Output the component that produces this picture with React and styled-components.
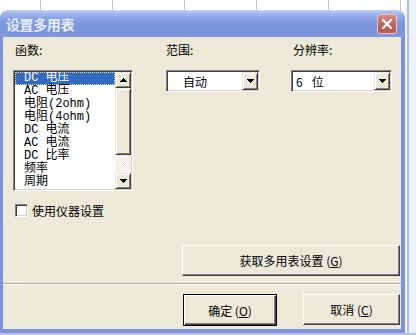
import styled, { createGlobalStyle, css } from "styled-components";

const GlobalStyle = createGlobalStyle`
	html, body {
		margin: 0;
		padding: 0;
		background: #fff;
	}
	body {
		font-family: "Noto Sans CJK SC", "Liberation Sans", sans-serif;
		font-size: 12px;
	}
`;

const Desktop = styled.div`
	width: 416px;
	height: 335px;
	overflow: hidden;
	box-sizing: border-box;
	padding-top: 10px;
	background-color: #fff;
	background-image: linear-gradient(
			180deg,
			transparent 333px,
			#b9c3e3 333px
		),
		linear-gradient(
			90deg,
			transparent 405px,
			#f4f6fb 405px,
			#f4f6fb 407px,
			#aebde9 407px,
			#aebde9 409px,
			#edf1fa 409px
		),
		linear-gradient(90deg, #c6c6c6 1px, transparent 1px);
	background-size: 100% 100%, 100% 100%, 72px 100%;
	background-position: 0 0, 0 0, 40px 0;
	background-repeat: no-repeat, no-repeat, repeat-x;
`;

const Window = styled.div`
	width: 405px;
	border-radius: 8px 8px 0 0;
	overflow: hidden;
	display: flex;
	flex-direction: column;
`;

const TitleBar = styled.div`
	height: 27px;
	display: flex;
	align-items: center;
	justify-content: space-between;
	padding: 0 8px 0 6px;
	background: linear-gradient(
		180deg,
		#c6d3f6 0px,
		#a5b8ed 3px,
		#8ba3e5 8px,
		#7d97df 14px,
		#7b94de 22px,
		#8399e0 27px
	);
`;

const Title = styled.span`
	color: #e6edfb;
	font-weight: 700;
	font-size: 14px;
	letter-spacing: -0.4px;
`;

const CloseButton = styled.div`
	width: 20px;
	height: 20px;
	box-sizing: border-box;
	border: 1px solid #e9c9c6;
	border-radius: 3px;
	background: linear-gradient(180deg, #d48c84, #bd6158 60%, #b65a52);
	display: flex;
	align-items: center;
	justify-content: center;
`;

const Frame = styled.div`
	height: 292px;
	background: #ece9d8;
	border: solid #7d93df;
	border-width: 0 4px 4px 3px;
	display: flex;
	flex-direction: column;
`;

const TopArea = styled.div`
	display: flex;
	padding: 7px 0 0 10px;
`;

const Column = styled.div`
	width: ${(p) => p.$w}px;
	margin-left: ${(p) => p.$gap || 0}px;
	display: flex;
	flex-direction: column;
`;

const Label = styled.div`
	height: 12px;
	line-height: 12px;
	margin: 0 0 14px ${(p) => p.$indent || 0}px;
	color: #000;
`;

const Sunken = css`
	box-sizing: border-box;
	border: 1px solid;
	border-color: #808080 #fff #fff #808080;
	box-shadow: inset 1px 1px #404040, inset -1px -1px #d4d0c8;
	background: #fff;
	padding: 1px;
`;

const Raised = css`
	box-sizing: border-box;
	background: #ece9d8;
	border: 1px solid;
	border-color: #ece9d8 #404040 #404040 #ece9d8;
	box-shadow: inset 1px 1px #fff, inset -1px -1px #808080;
`;

const ListBox = styled.div`
	${Sunken}
	width: 120px;
	height: 121px;
	display: flex;
`;

const Items = styled.div`
	flex: 1;
	display: flex;
	flex-direction: column;
	font-family: "Liberation Mono", "Noto Sans CJK SC", monospace;
	font-size: 12px;
	overflow: hidden;
`;

const Item = styled.div`
	height: 13px;
	line-height: 13px;
	padding-left: 9px;
	white-space: pre;
	color: #000;
	${(p) =>
		p.$selected &&
		css`
			background: #316ac5;
			color: #fff;
			outline: 1px dotted #e8d890;
			outline-offset: -1px;
		`}
`;

const ScrollBar = styled.div`
	width: 16px;
	display: flex;
	flex-direction: column;
`;

const ScrollButton = styled.div`
	${Raised}
	height: ${(p) => p.$h}px;
	display: flex;
	align-items: center;
	justify-content: center;
`;

const Track = styled.div`
	flex: 1;
	background: repeating-conic-gradient(#fff 0 25%, #ece9d8 0 50%) 0 0 / 2px
		2px;
`;

const Combo = styled.div`
	${Sunken}
	height: 22px;
	display: flex;
`;

const ComboText = styled.div`
	flex: 1;
	display: flex;
	align-items: center;
	gap: 9px;
	padding-left: ${(p) => p.$indent}px;
	white-space: pre;
	color: #000;
`;

const DropButton = styled.div`
	${Raised}
	width: 16px;
	display: flex;
	align-items: center;
	justify-content: center;
`;

const CheckRow = styled.label`
	display: flex;
	align-items: center;
	gap: 4px;
	margin: 13px 0 0 12px;
	height: 13px;
	color: #000;
`;

const CheckBox = styled.span`
	${Sunken}
	width: 13px;
	height: 13px;
`;

const ButtonRow = styled.div`
	display: flex;
	justify-content: flex-end;
	gap: ${(p) => p.$gap || 0}px;
	padding-right: 1px;
	margin-top: ${(p) => p.$top}px;
`;

const Button = styled.button`
	${Raised}
	width: ${(p) => p.$w}px;
	height: ${(p) => p.$h}px;
	padding: 0;
	font-family: "Noto Sans CJK SC", "Liberation Sans", sans-serif;
	font-size: 12px;
	color: #000;
	border-color: #fff #404040 #404040 #fff;
	box-shadow: inset -1px -1px #808080;
	${(p) =>
		p.$default &&
		css`
			border-color: #000;
			box-shadow: inset 1px 1px #fff, inset -1px -1px #404040,
				inset -2px -2px #808080;
		`}
`;

const Mnemonic = styled.span`
	text-decoration: underline;
`;

const Separator = styled.div`
	margin-top: 7px;
	border-top: 1px solid #aca899;
	border-bottom: 1px solid #fff;
`;

const Arrow = ({ down }) => (
	<svg width="7" height="4" viewBox="0 0 7 4" shapeRendering="crispEdges">
		<path
			d={
				down
					? "M0 0h7v1H6v1H5v1H4v1H3V3H2V2H1V1H0z"
					: "M3 0h1v1h1v1h1v1h1v1H0V3h1V2h1V1h1z"
			}
			fill="#000"
		/>
	</svg>
);

const functions = [
	"DC 电压",
	"AC 电压",
	"电阻(2ohm)",
	"电阻(4ohm)",
	"DC 电流",
	"AC 电流",
	"DC 比率",
	"频率",
	"周期",
];

const App = () => {
	return (
		<Desktop>
			<GlobalStyle />
			<Window>
				<TitleBar>
					<Title>设置多用表</Title>
					<CloseButton>
						<svg width="10" height="10" viewBox="0 0 10 10">
							<path
								d="M1 1L9 9M9 1L1 9"
								stroke="#fff"
								strokeWidth="2.2"
								strokeLinecap="square"
							/>
						</svg>
					</CloseButton>
				</TitleBar>
				<Frame>
					<TopArea>
						<Column $w={120}>
							<Label $indent={2}>函数:</Label>
							<ListBox>
								<Items>
									{functions.map((f, i) => (
										<Item key={f} $selected={i === 0}>
											{f}
										</Item>
									))}
								</Items>
								<ScrollBar>
									<ScrollButton $h={16}>
										<Arrow />
									</ScrollButton>
									<ScrollButton $h={67} />
									<Track />
									<ScrollButton $h={16}>
										<Arrow down />
									</ScrollButton>
								</ScrollBar>
							</ListBox>
						</Column>
						<Column $w={94} $gap={33}>
							<Label>范围:</Label>
							<Combo>
								<ComboText $indent={15}>自动</ComboText>
								<DropButton>
									<Arrow down />
								</DropButton>
							</Combo>
						</Column>
						<Column $w={101} $gap={31}>
							<Label $indent={2}>分辨率:</Label>
							<Combo>
								<ComboText $indent={3}>
									<span>6</span>
									<span>位</span>
								</ComboText>
								<DropButton>
									<Arrow down />
								</DropButton>
							</Combo>
						</Column>
					</TopArea>
					<CheckRow>
						<CheckBox />
						使用仪器设置
					</CheckRow>
					<ButtonRow $top={28}>
						<Button $w={218} $h={31}>
							获取多用表设置 (<Mnemonic>G</Mnemonic>)
						</Button>
					</ButtonRow>
					<Separator />
					<ButtonRow $top={9} $gap={26}>
						<Button $w={94} $h={32} $default>
							确定 (<Mnemonic>O</Mnemonic>)
						</Button>
						<Button $w={97} $h={31}>
							取消 (<Mnemonic>C</Mnemonic>)
						</Button>
					</ButtonRow>
				</Frame>
			</Window>
		</Desktop>
	);
};

export default App;
